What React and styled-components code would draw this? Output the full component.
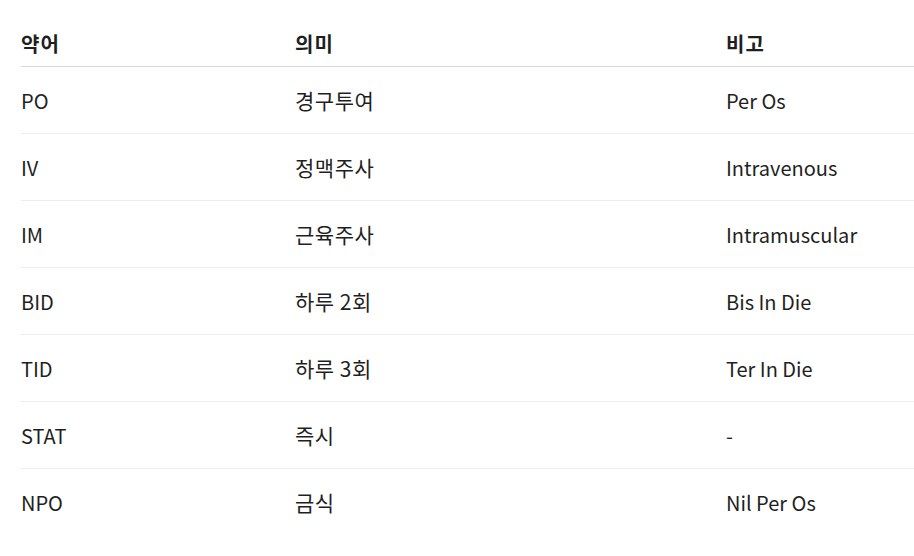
import React from 'react';
import styled, { createGlobalStyle } from 'styled-components';

const Global = createGlobalStyle`
  html, body {
    margin: 0;
    background: #fff;
    overflow: hidden;
  }
  body {
    font-family: "Noto Sans CJK KR", "Noto Sans", sans-serif;
    color: #1f1f1f;
  }
`;

const Wrap = styled.div`
  padding: 20px 0 0 21px;
`;

const Table = styled.table`
  border-collapse: collapse;
  width: 893px;
  table-layout: fixed;
  font-size: 20px;
`;

const Head = styled.th`
  text-align: left;
  font-weight: 700;
  height: 46px;
  padding: 0;
  vertical-align: middle;
  border-bottom: 1px solid #d9d9d9;
  letter-spacing: 1px;
  width: ${p => p.$w || 'auto'};
`;

const Row = styled.tr`
  border-bottom: 1px solid ${p => (p.$last ? 'transparent' : '#ededed')};
`;

const Cell = styled.td`
  height: 66px;
  padding: 0;
  vertical-align: middle;
  font-size: ${p => (p.$ko ? '21px' : '20px')};
  letter-spacing: ${p => (p.$ko ? '0.5px' : 'normal')};
`;

const rows = [
  ['PO', '경구투여', 'Per Os'],
  ['IV', '정맥주사', 'Intravenous'],
  ['IM', '근육주사', 'Intramuscular'],
  ['BID', '하루 2회', 'Bis In Die'],
  ['TID', '하루 3회', 'Ter In Die'],
  ['STAT', '즉시', '-'],
  ['NPO', '금식', 'Nil Per Os'],
];

export default function App() {
  return (
    <Wrap>
      <Global />
      <Table>
        <thead>
          <tr>
            <Head $w="274px">약어</Head>
            <Head $w="431px">의미</Head>
            <Head>비고</Head>
          </tr>
        </thead>
        <tbody>
          {rows.map((r, i) => (
            <Row key={r[0]} $last={i === rows.length - 1}>
              <Cell>{r[0]}</Cell>
              <Cell $ko>{r[1]}</Cell>
              <Cell>{r[2]}</Cell>
            </Row>
          ))}
        </tbody>
      </Table>
    </Wrap>
  );
}
